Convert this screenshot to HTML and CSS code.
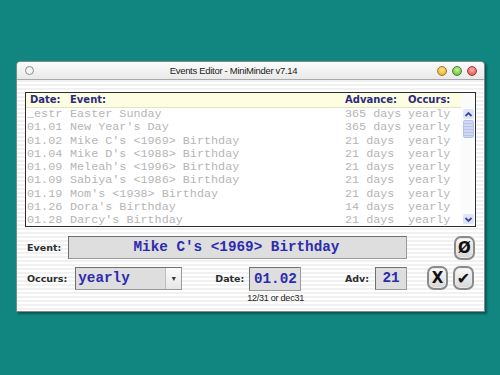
FILE: index.html
```html
<!DOCTYPE html>
<html>
<head>
<meta charset="utf-8">
<link rel="stylesheet" href="styles.css">
</head>
<body>
<div class="window">
  <div class="titlebar">
    <span class="dot dot-close"></span>
    <span class="title">Events Editor - MiniMinder v7.14</span>
    <span class="dots">
      <span class="dot dot-orange"></span>
      <span class="dot dot-green"></span>
      <span class="dot dot-red"></span>
    </span>
  </div>
  <div class="content">
    <div class="list">
      <div class="list-main">
        <div class="row head">
          <span class="c-date">Date:</span><span>Event:</span><span>Advance:</span><span>Occurs:</span>
        </div>
        <div class="row"><span>_estr</span><span>Easter Sunday</span><span>365 days</span><span>yearly</span></div>
        <div class="row"><span>01.01</span><span>New Year's Day</span><span>365 days</span><span>yearly</span></div>
        <div class="row"><span>01.02</span><span>Mike C's &lt;1969&gt; Birthday</span><span>21 days</span><span>yearly</span></div>
        <div class="row"><span>01.04</span><span>Mike D's &lt;1988&gt; Birthday</span><span>21 days</span><span>yearly</span></div>
        <div class="row"><span>01.09</span><span>Meleah's &lt;1996&gt; Birthday</span><span>21 days</span><span>yearly</span></div>
        <div class="row"><span>01.09</span><span>Sabiya's &lt;1986&gt; Birthday</span><span>21 days</span><span>yearly</span></div>
        <div class="row"><span>01.19</span><span>Mom's &lt;1938&gt; Birthday</span><span>21 days</span><span>yearly</span></div>
        <div class="row"><span>01.26</span><span>Dora's Birthday</span><span>14 days</span><span>yearly</span></div>
        <div class="row"><span>01.28</span><span>Darcy's Birthday</span><span>21 days</span><span>yearly</span></div>
      </div>
      <div class="scrollbar">
        <span class="arrow">
          <svg width="9" height="7" viewBox="0 0 9 7"><path d="M1.5 5 L4.5 2 L7.5 5" fill="none" stroke="#3a4aa8" stroke-width="1.8"/></svg>
        </span>
        <span class="thumb"></span>
        <span class="track"></span>
        <span class="arrow">
          <svg width="9" height="7" viewBox="0 0 9 7"><path d="M1.5 2 L4.5 5 L7.5 2" fill="none" stroke="#3a4aa8" stroke-width="1.8"/></svg>
        </span>
      </div>
    </div>

    <div class="event-row">
      <span class="label">Event:</span>
      <div class="field event-field">Mike C's &lt;1969&gt; Birthday</div>
      <div class="btn btn-clear">Ø</div>
    </div>

    <div class="occurs-row">
      <span class="label occ-label">Occurs:</span>
      <div class="field select"><span class="sel-text">yearly</span><span class="sel-btn">&#9662;</span></div>
      <span class="label date-label">Date:</span>
      <div class="date-group">
        <div class="field date-field">01.02</div>
        <span class="hint">12/31 or dec31</span>
      </div>
      <span class="label adv-label">Adv:</span>
      <div class="field adv-field">21</div>
      <div class="btn btn-x">X</div>
      <div class="btn btn-ok">✔</div>
    </div>
  </div>
</div>
</body>
</html>
```

FILE: styles.css
```css
html, body {
  margin: 0;
  padding: 0;
}
body {
  width: 500px;
  height: 375px;
  background: #118580;
  padding: 61px 0 0 16px;
  box-sizing: border-box;
  overflow: hidden;
}
.window {
  width: 469px;
  height: 251px;
  box-sizing: border-box;
  border: 1px solid #7d8a8a;
  border-radius: 4px 4px 0 0;
  background: repeating-linear-gradient(#ffffff 0 2px, #f1f1f1 2px 4px);
  box-shadow: 2px 2px 2px rgba(0,0,0,0.35);
  display: flex;
  flex-direction: column;
}
.titlebar {
  height: 17px;
  display: flex;
  align-items: center;
  padding: 0 7px 0 8px;
  background: linear-gradient(#fbfbfb, #e9e9e9);
  border-bottom: 1px solid #a9a9a9;
  border-radius: 4px 4px 0 0;
}
.title {
  flex: 1;
  text-align: center;
  font-family: "Liberation Sans", Arial, sans-serif;
  font-size: 9.5px;
  letter-spacing: -0.3px;
  color: #222;
  padding-right: 4px;
}
.dots {
  display: flex;
  gap: 5px;
}
.dot {
  width: 8px;
  height: 8px;
  border-radius: 50%;
  display: inline-block;
  box-sizing: border-box;
}
.dot-close {
  width: 9px;
  height: 9px;
  border: 1.5px solid #8a8a8a;
  background: #f4f4f4;
}
.dot-orange {
  background: radial-gradient(circle at 50% 35%, #ffe48a, #e9a21a);
  border: 1px solid #9a7a30;
  width: 10px; height: 10px;
}
.dot-green {
  background: radial-gradient(circle at 50% 35%, #c9f59a, #4fb324);
  border: 1px solid #4f7f30;
  width: 10px; height: 10px;
}
.dot-red {
  background: radial-gradient(circle at 50% 35%, #ffb0a8, #e24040);
  border: 1px solid #954040;
  width: 10px; height: 10px;
}
.content {
  padding: 12px 0 0 8px;
}
.list {
  width: 451px;
  height: 135px;
  box-sizing: border-box;
  border: 1px solid #2d2d2d;
  background: #fff;
  display: flex;
}
.list-main {
  flex: 1;
}
.row {
  display: grid;
  grid-template-columns: 43px 275px 63px 1fr;
  height: 13.3px;
  line-height: 13.3px;
  padding-left: 1px;
  font-family: "Liberation Mono", "Courier New", monospace;
  font-size: 11.75px;
  color: #b5b5b5;
  white-space: pre;
}
.row.head {
  height: 14px;
  line-height: 14px;
  background: #fdfde1;
  border-bottom: 1px solid #e3e3c8;
  font-family: "DejaVu Sans", Verdana, sans-serif;
  font-weight: bold;
  font-size: 10px;
  color: #2a2a7c;
}
.row.head .c-date {
  padding-left: 3px;
}
.scrollbar {
  width: 14px;
  display: flex;
  flex-direction: column;
  align-items: center;
  padding: 16px 0 0 0;
  box-sizing: border-box;
  background: #fbfbfb;
}
.arrow {
  width: 11px;
  height: 10px;
  display: flex;
  align-items: center;
  justify-content: center;
  background: #dfe4f6;
  border-radius: 2px;
}
.thumb {
  width: 9px;
  height: 16px;
  margin-top: 1px;
  background: repeating-linear-gradient(#cfd9f4 0 2px, #b5c3ea 2px 3px);
  border: 1px solid #b8c3e3;
  border-radius: 2px;
}
.track {
  flex: 1;
}
.scrollbar .arrow:last-child {
  margin-bottom: 2px;
}
.label {
  font-family: "DejaVu Sans", Verdana, sans-serif;
  font-weight: bold;
  font-size: 9.5px;
  color: #2e2e2e;
}
.field {
  box-sizing: border-box;
  background: #dedede;
  border: 1px solid #6f6f6f;
  border-right-color: #9a9a9a;
  border-bottom-color: #9a9a9a;
  font-family: "Liberation Mono", "Courier New", monospace;
  font-weight: bold;
  font-size: 14.3px;
  color: #2b2bb0;
}
.event-row {
  display: flex;
  align-items: center;
  margin-top: 9px;
  height: 23px;
}
.event-row .label {
  width: 43px;
  padding-left: 2px;
  box-sizing: border-box;
}
.event-field {
  width: 339px;
  height: 23px;
  line-height: 21px;
  text-align: center;
  padding-right: 2px;
}
.btn {
  box-sizing: border-box;
  width: 21px;
  height: 24px;
  border: 2px solid #8b8b8b;
  border-radius: 7px;
  background: linear-gradient(#fafafa, #d6d6d6);
  box-shadow: inset 0 0 0 1px #eaeaea;
  display: flex;
  align-items: center;
  justify-content: center;
  font-family: "DejaVu Sans", sans-serif;
  font-weight: bold;
  color: #111;
}
.btn-clear {
  margin-left: 47px;
  font-size: 15px;
}
.occurs-row {
  display: flex;
  align-items: flex-start;
  margin-top: 8px;
}
.occurs-row .label {
  line-height: 24px;
}
.occ-label {
  padding-left: 2px;
}
.select {
  margin-left: 8px;
  width: 107px;
  height: 23px;
  display: flex;
  align-items: stretch;
  padding-left: 2px;
}
.sel-text {
  flex: 1;
  line-height: 21px;
}
.sel-btn {
  width: 15px;
  background: linear-gradient(#fbfbfb, #e6e6e6);
  border-left: 1px solid #bdbdbd;
  color: #333;
  font-family: "DejaVu Sans", sans-serif;
  font-weight: normal;
  font-size: 8px;
  display: flex;
  align-items: center;
  justify-content: center;
}
.date-label {
  margin-left: 33px;
}
.date-group {
  margin-left: 5px;
  display: flex;
  flex-direction: column;
  align-items: flex-start;
}
.date-field {
  width: 52px;
  height: 24px;
  line-height: 22px;
  text-align: center;
}
.hint {
  font-family: "Liberation Sans", Arial, sans-serif;
  font-size: 9px;
  letter-spacing: -0.25px;
  color: #222;
  margin-top: 2px;
  margin-left: -2px;
}
.adv-label {
  margin-left: 41px;
}
.adv-field {
  margin-left: 6px;
  width: 32px;
  height: 23px;
  line-height: 21px;
  text-align: center;
}
.btn-x {
  margin-left: 20px;
  font-size: 15px;
  margin-top: -1px;
}
.btn-ok {
  margin-left: 5px;
  font-size: 16px;
  margin-top: -1px;
}
```
